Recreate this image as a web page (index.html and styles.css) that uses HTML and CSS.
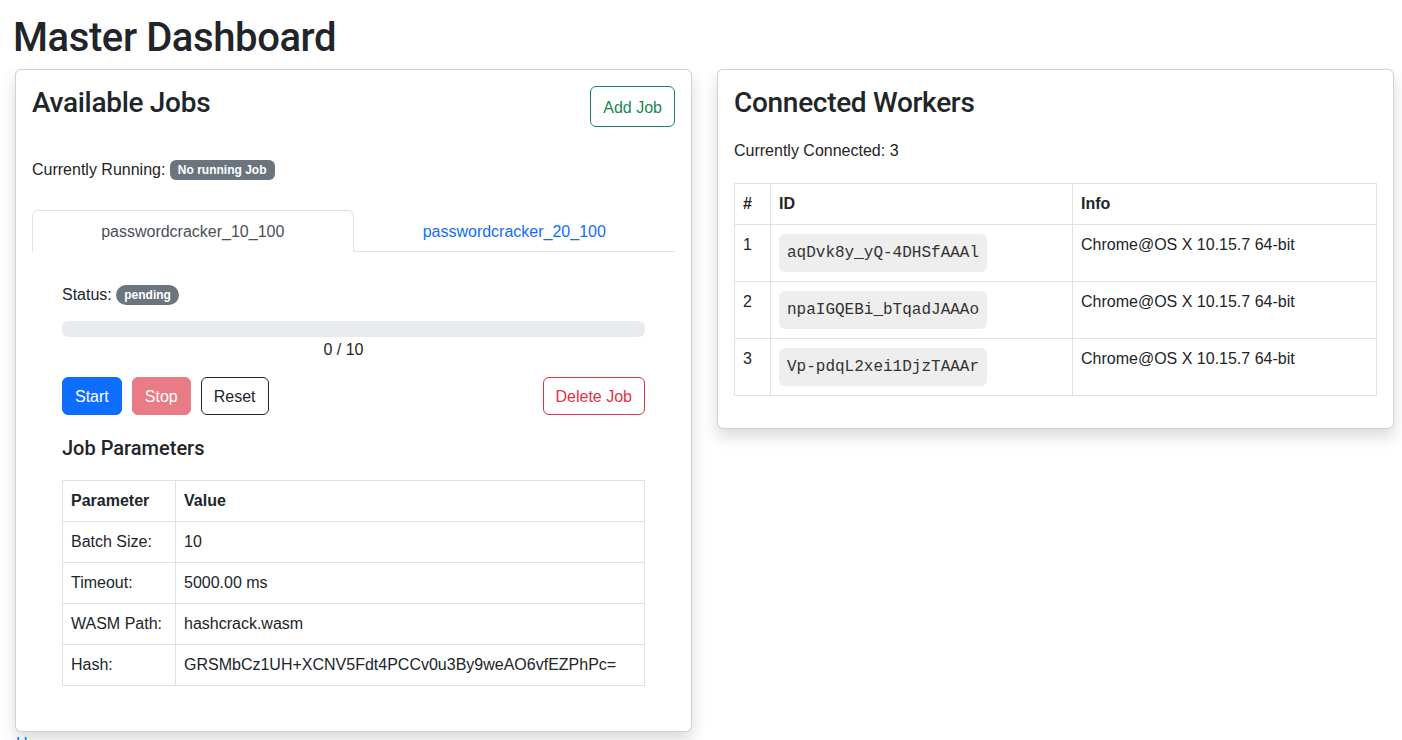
FILE: index.html
```html
<!DOCTYPE html>
<html lang="en">
<head>
<meta charset="utf-8">
<title>Master Dashboard</title>
<link rel="stylesheet" href="styles.css">
</head>
<body>
<div class="page">
  <h1 class="title">Master Dashboard</h1>
  <div class="grid">
    <div class="col">
      <div class="card">
        <div class="card-body">
          <div class="card-head">
            <h3 class="card-title">Available Jobs</h3>
            <button class="btn btn-add">Add Job</button>
          </div>
          <p class="running">Currently Running: <span class="badge">No running Job</span></p>
          <div class="tabs">
            <a class="tab active">passwordcracker_10_100</a>
            <a class="tab">passwordcracker_20_100</a>
          </div>
          <div class="pane">
            <p class="status">Status: <span class="badge pill">pending</span></p>
            <div class="progress"><div class="progress-bar" style="width:0%"></div></div>
            <div class="progress-label">0 / 10</div>
            <div class="actions">
              <div class="action-group">
                <button class="btn btn-start">Start</button>
                <button class="btn btn-stop" disabled>Stop</button>
                <button class="btn btn-reset">Reset</button>
              </div>
              <button class="btn btn-delete">Delete Job</button>
            </div>
            <h5 class="section-title">Job Parameters</h5>
            <table class="table params">
              <thead>
                <tr><th class="param-col">Parameter</th><th>Value</th></tr>
              </thead>
              <tbody>
                <tr><td>Batch Size:</td><td>10</td></tr>
                <tr><td>Timeout:</td><td>5000.00 ms</td></tr>
                <tr><td>WASM Path:</td><td>hashcrack.wasm</td></tr>
                <tr><td>Hash:</td><td>GRSMbCz1UH+XCNV5Fdt4PCCv0u3By9weAO6vfEZPhPc=</td></tr>
              </tbody>
            </table>
          </div>
        </div>
      </div>
      <a class="footer-link">Home</a>
    </div>
    <div class="col">
      <div class="card">
        <div class="card-body">
          <h3 class="card-title workers-title">Connected Workers</h3>
          <p class="connected">Currently Connected: 3</p>
          <table class="table workers">
            <thead>
              <tr><th class="num-col">#</th><th class="id-col">ID</th><th>Info</th></tr>
            </thead>
            <tbody>
              <tr><td>1</td><td><code class="wid">aqDvk8y_yQ-4DHSfAAAl</code></td><td>Chrome@OS X 10.15.7 64-bit</td></tr>
              <tr><td>2</td><td><code class="wid">npaIGQEBi_bTqadJAAAo</code></td><td>Chrome@OS X 10.15.7 64-bit</td></tr>
              <tr><td>3</td><td><code class="wid">Vp-pdqL2xei1DjzTAAAr</code></td><td>Chrome@OS X 10.15.7 64-bit</td></tr>
            </tbody>
          </table>
        </div>
      </div>
    </div>
  </div>
</div>
</body>
</html>
```

FILE: styles.css
```css
* { box-sizing: border-box; }
html, body { margin: 0; padding: 0; background: #fff; }
body {
  font-family: "Liberation Sans", Arial, sans-serif;
  font-size: 16px;
  line-height: 24px;
  color: #212529;
  overflow: hidden;
}
.page { padding: 14px 8px 0 0; }
.title {
  margin: 0 0 7px 13px;
  font-family: Roboto, "Liberation Sans", sans-serif;
  font-size: 40px;
  line-height: 48px;
  font-weight: 500;
  letter-spacing: -0.4px;
}
.grid {
  display: grid;
  grid-template-columns: 1fr 1fr;
  column-gap: 25px;
  padding-left: 15px;
  align-items: start;
}
.card {
  border: 1px solid rgba(0,0,0,.175);
  border-radius: 6px;
  background: #fff;
  box-shadow: 0 8px 16px rgba(0,0,0,.15);
}
.card-body { padding: 16px; }
.card-head {
  display: flex;
  justify-content: space-between;
  align-items: flex-start;
  margin-bottom: 31px;
}
.card-title {
  margin: 0;
  font-family: Roboto, "Liberation Sans", sans-serif;
  font-size: 28px;
  line-height: 33.6px;
  font-weight: 500;
  letter-spacing: -0.3px;
}
.workers-title { margin-bottom: 19px; }
p { margin: 0; }
.running { margin-bottom: 28px; }
.connected { margin-bottom: 20px; }
.badge {
  display: inline-block;
  padding: 4px 8px;
  font-size: 12px;
  line-height: 12px;
  font-weight: 700;
  color: #fff;
  background: #6c757d;
  border-radius: 6px;
  vertical-align: 1px;
}
.badge.pill { border-radius: 10px; }
.btn {
  display: inline-block;
  font-family: inherit;
  font-size: 16px;
  line-height: 24px;
  padding: 7px 12px 5px;
  border: 1px solid transparent;
  border-radius: 6px;
  background: transparent;
  cursor: pointer;
}
.btn-add { color: #198754; border-color: #198754; padding: 9px 12px 6px; }
.btn-start { background: #0d6efd; border-color: #0d6efd; color: #fff; }
.btn-stop { background: #dc3545; border-color: #dc3545; color: #fff; opacity: .65; }
.btn-reset { color: #212529; border-color: #212529; }
.btn-delete { color: #dc3545; border-color: #dc3545; }
.tabs {
  display: flex;
  border-bottom: 1px solid #dee2e6;
}
.tab {
  flex: 1 1 0;
  text-align: center;
  padding: 9px 16px 7px;
  border: 1px solid transparent;
  border-radius: 6px 6px 0 0;
  margin-bottom: -1px;
  color: #0d6efd;
}
.tab.active {
  color: #495057;
  background: #fff;
  border-color: #dee2e6 #dee2e6 #fff;
}
.pane { padding: 31px 30px 29px; }
.progress {
  margin-top: 14px;
  height: 16px;
  background: #e9ecef;
  border-radius: 6px;
  overflow: hidden;
}
.progress-bar { height: 100%; background: #0d6efd; }
.progress-label { text-align: center; padding-right: 20px; padding-top: 1px; }
.actions {
  margin-top: 15px;
  display: flex;
  justify-content: space-between;
  align-items: center;
}
.action-group { display: flex; gap: 10px; }
.section-title {
  margin: 21px 0 20px;
  font-family: Roboto, "Liberation Sans", sans-serif;
  font-size: 20px;
  line-height: 24px;
  font-weight: 500;
}
.table {
  width: 100%;
  border-collapse: collapse;
  margin: 0;
}
.table th, .table td {
  border: 1px solid #dee2e6;
  padding: 8px;
  text-align: left;
  vertical-align: top;
}
.table th { font-weight: 700; }
.param-col { width: 113px; }
.num-col { width: 36px; }
.id-col { width: 302px; }
.workers { margin-bottom: 16px; }
.wid {
  display: inline-block;
  font-family: "Liberation Mono", "Courier New", monospace;
  font-size: 16px;
  line-height: 24px;
  padding: 7px 8px;
  margin: 1px 0;
  background: #eeeeee;
  color: #333;
  border-radius: 6px;
}
.footer-link {
  display: block;
  color: #0d6efd;
  text-decoration: underline;
  padding-left: 1px;
}
```
